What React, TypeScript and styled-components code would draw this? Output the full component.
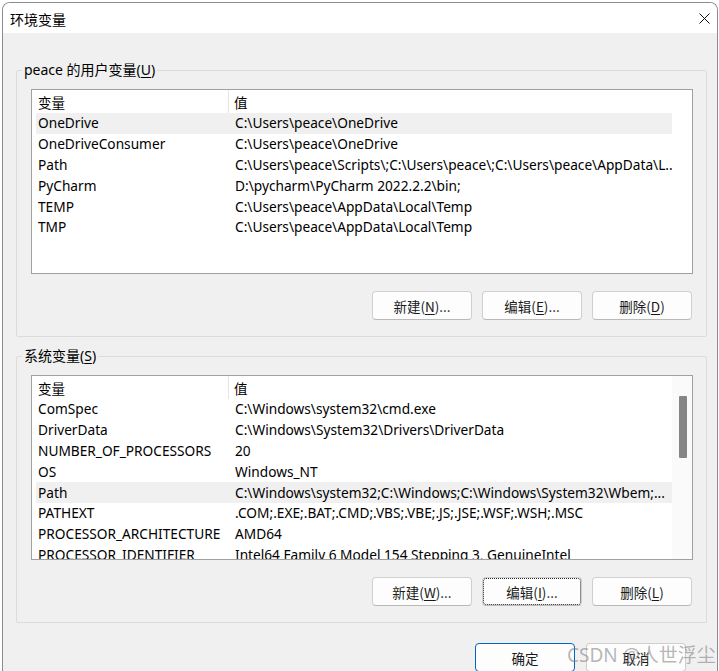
import React from 'react';
import styled, { createGlobalStyle } from 'styled-components';

const GlobalStyle = createGlobalStyle`
  html, body {
    margin: 0;
    padding: 0;
    background: #fff;
    overflow: hidden;
  }
  body {
    font-family: "Noto Sans", "Noto Sans CJK SC", sans-serif;
    font-size: 14px;
    color: #000;
  }
`;

const Window = styled.div`
  position: relative;
  box-sizing: border-box;
  margin: 2px 1px 0 2px;
  width: 716px;
  height: 700px;
  border: 1px solid #8c8c8c;
  border-bottom: none;
  border-radius: 8px 8px 0 0;
  overflow: hidden;
  background: #f0f0f0;
`;

const TitleBar = styled.div`
  height: 30px;
  background: #fff;
  display: flex;
  align-items: center;
  justify-content: space-between;
  padding: 0 7px 0 7px;
`;

const Title = styled.span`
  font-family: "Noto Sans CJK SC", sans-serif;
  font-size: 14px;
  line-height: 20px;
  margin-top: 1px;
`;

const Close = styled.svg`
  width: 11px;
  height: 11px;
  margin-top: 1px;
`;

const Content = styled.div`
  padding-top: 27px;
`;

const Group = styled.fieldset<{ $gap?: number }>`
  box-sizing: border-box;
  margin: ${(p) => p.$gap ?? 0}px 10px 0 13px;
  padding: 0;
  min-width: 0;
  border: 1px solid #dcdcdc;
  border-radius: 2px;
`;

const Legend = styled.legend`
  margin-left: 5px;
  padding: 0 2px;
  line-height: 20px;
  font-size: 14px;
`;

const GroupBody = styled.div`
  padding: 9px 13px 16px 14px;
`;

const ListBox = styled.div`
  height: 185px;
  box-sizing: border-box;
  border: 1px solid #a0a0a0;
  background: #fff;
  display: flex;
  overflow: hidden;
`;

const ListMain = styled.div`
  flex: 1;
  min-width: 0;
  overflow: hidden;
`;

const HeaderRow = styled.div`
  display: grid;
  grid-template-columns: 197px 1fr;
  height: 23px;
  align-items: center;
`;

const HeaderCell = styled.div<{ $divider?: boolean }>`
  height: 100%;
  display: flex;
  align-items: center;
  padding-left: ${(p) => (p.$divider ? 6 : 5)}px;
  border-right: ${(p) => (p.$divider ? '1px solid #e5e5e5' : 'none')};
  font-family: "Noto Sans CJK SC", sans-serif;
  font-size: 13.5px;
`;

const Row = styled.div<{ $selected?: boolean }>`
  display: grid;
  grid-template-columns: 197px 1fr;
  height: 20.8px;
  margin-left: 4px;
  align-items: center;
  background: ${(p) => (p.$selected ? '#f0f0f0' : 'transparent')};
`;

const Cell = styled.div`
  padding-left: 2px;
  white-space: nowrap;
  overflow: hidden;
  font-size: 13.7px;
  line-height: 20px;
`;

const ScrollTrack = styled.div<{ $active?: boolean }>`
  width: 20px;
  flex-shrink: 0;
  background: ${(p) => (p.$active ? '#fafafa' : '#fff')};
  padding-top: 20px;
  box-sizing: border-box;
  display: flex;
  justify-content: center;
`;

const Thumb = styled.div`
  width: 8px;
  height: 62px;
  margin-left: 1px;
  background: #858585;
  border-radius: 1px;
`;

const ButtonRow = styled.div`
  display: flex;
  justify-content: flex-end;
  gap: 10px;
  margin-top: 17px;
  padding-right: 1px;
`;

const Button = styled.button<{ $focused?: boolean; $primary?: boolean }>`
  box-sizing: border-box;
  width: 100px;
  height: 29px;
  padding: 0;
  background: #fdfdfd;
  border: 1px solid ${(p) => (p.$primary ? '#0067c0' : '#d0d0d0')};
  border-bottom-color: ${(p) => (p.$primary ? '#0067c0' : '#b9b9b9')};
  border-radius: 4px;
  font-family: "Noto Sans CJK SC", sans-serif;
  font-size: 13.5px;
  color: #1a1a1a;
  outline: ${(p) => (p.$focused ? '1px dotted #222' : 'none')};
  outline-offset: -2px;
  display: flex;
  align-items: center;
  justify-content: center;
`;

const Key = styled.u`
  text-underline-offset: 2px;
`;

const Footer = styled.div`
  display: flex;
  justify-content: flex-end;
  gap: 11px;
  margin-top: 20px;
  padding-right: 31px;
`;

const Watermark = styled.div`
  position: absolute;
  left: 564px;
  top: 640px;
  font-family: "Noto Sans", "Noto Sans CJK SC", sans-serif;
  font-size: 19px;
  line-height: 24px;
  color: rgba(120, 120, 120, 0.55);
  white-space: nowrap;
  pointer-events: none;
`;

type Variable = { name: string; value: string };

const userVars: Variable[] = [
  { name: 'OneDrive', value: 'C:\\Users\\peace\\OneDrive' },
  { name: 'OneDriveConsumer', value: 'C:\\Users\\peace\\OneDrive' },
  { name: 'Path', value: 'C:\\Users\\peace\\Scripts\\;C:\\Users\\peace\\;C:\\Users\\peace\\AppData\\L...' },
  { name: 'PyCharm', value: 'D:\\pycharm\\PyCharm 2022.2.2\\bin;' },
  { name: 'TEMP', value: 'C:\\Users\\peace\\AppData\\Local\\Temp' },
  { name: 'TMP', value: 'C:\\Users\\peace\\AppData\\Local\\Temp' },
];

const systemVars: Variable[] = [
  { name: 'ComSpec', value: 'C:\\Windows\\system32\\cmd.exe' },
  { name: 'DriverData', value: 'C:\\Windows\\System32\\Drivers\\DriverData' },
  { name: 'NUMBER_OF_PROCESSORS', value: '20' },
  { name: 'OS', value: 'Windows_NT' },
  { name: 'Path', value: 'C:\\Windows\\system32;C:\\Windows;C:\\Windows\\System32\\Wbem;...' },
  { name: 'PATHEXT', value: '.COM;.EXE;.BAT;.CMD;.VBS;.VBE;.JS;.JSE;.WSF;.WSH;.MSC' },
  { name: 'PROCESSOR_ARCHITECTURE', value: 'AMD64' },
  { name: 'PROCESSOR_IDENTIFIER', value: 'Intel64 Family 6 Model 154 Stepping 3, GenuineIntel' },
];

const VarList: React.FC<{ vars: Variable[]; selected: number; scroll?: boolean }> = ({ vars, selected, scroll }) => (
  <ListBox>
    <ListMain>
      <HeaderRow>
        <HeaderCell $divider>变量</HeaderCell>
        <HeaderCell>值</HeaderCell>
      </HeaderRow>
      {vars.map((v, i) => (
        <Row key={v.name + i} $selected={i === selected}>
          <Cell>{v.name}</Cell>
          <Cell>{v.value}</Cell>
        </Row>
      ))}
    </ListMain>
    <ScrollTrack $active={scroll}>{scroll && <Thumb />}</ScrollTrack>
  </ListBox>
);

const App: React.FC = () => {
  return (
    <>
      <GlobalStyle />
      <Window>
        <TitleBar>
          <Title>环境变量</Title>
          <Close viewBox="0 0 11 11">
            <path d="M0.5 0.5 L10.5 10.5 M10.5 0.5 L0.5 10.5" stroke="#111" strokeWidth="1" fill="none" />
          </Close>
        </TitleBar>
        <Content>
          <Group>
            <Legend>
              peace 的用户变量(<Key>U</Key>)
            </Legend>
            <GroupBody>
              <VarList vars={userVars} selected={0} />
              <ButtonRow>
                <Button>新建(<Key>N</Key>)...</Button>
                <Button>编辑(<Key>E</Key>)...</Button>
                <Button>删除(<Key>D</Key>)</Button>
              </ButtonRow>
            </GroupBody>
          </Group>
          <Group $gap={9}>
            <Legend>
              系统变量(<Key>S</Key>)
            </Legend>
            <GroupBody>
              <VarList vars={systemVars} selected={4} scroll />
              <ButtonRow>
                <Button>新建(<Key>W</Key>)...</Button>
                <Button $focused>编辑(<Key>I</Key>)...</Button>
                <Button>删除(<Key>L</Key>)</Button>
              </ButtonRow>
            </GroupBody>
          </Group>
          <Footer>
            <Button $primary>确定</Button>
            <Button>取消</Button>
          </Footer>
        </Content>
        <Watermark>CSDN @人世浮尘</Watermark>
      </Window>
    </>
  );
};

export default App;
